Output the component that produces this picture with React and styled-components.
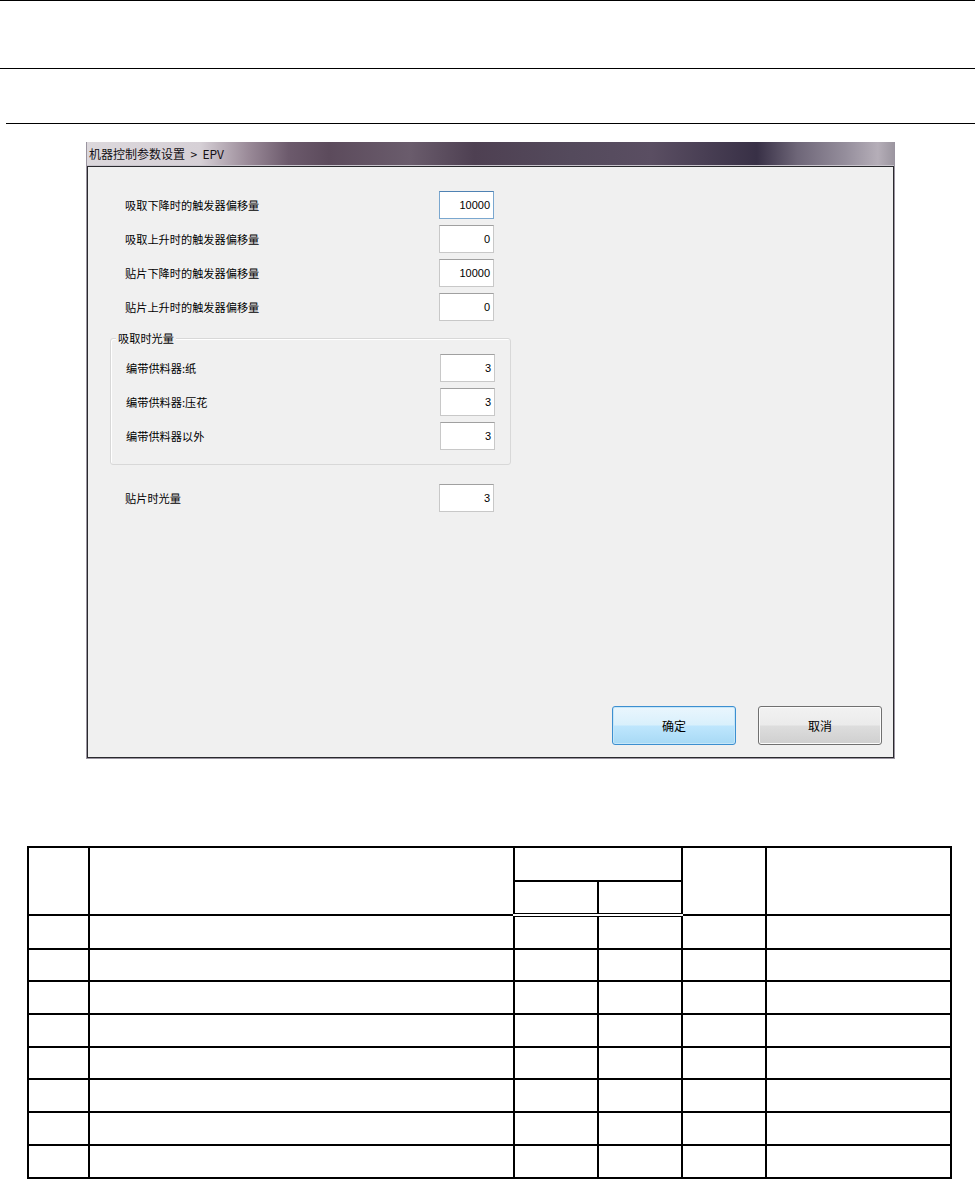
import styled, { createGlobalStyle } from "styled-components";

const GlobalStyle = createGlobalStyle`
  body {
    margin: 0;
    background: #ffffff;
    font-family: "Noto Sans CJK SC", "Liberation Sans", sans-serif;
  }
`;

const fields = [
  { label: "吸取下降时的触发器偏移量", value: "10000", focused: true },
  { label: "吸取上升时的触发器偏移量", value: "0" },
  { label: "贴片下降时的触发器偏移量", value: "10000" },
  { label: "贴片上升时的触发器偏移量", value: "0" },
];

const lightFields = [
  { label: "编带供料器:纸", value: "3" },
  { label: "编带供料器:压花", value: "3" },
  { label: "编带供料器以外", value: "3" },
];

const rows = Array.from({ length: 8 }, (_, i) => i);

export default function App() {
  return (
    <>
      <GlobalStyle />
      <Page>
        <Rule />
        <Rule $top={67} />
        <Rule $top={54} $left={6} />
        <Dialog>
          <TitleBar>机器控制参数设置&nbsp; &gt; &nbsp;EPV</TitleBar>
          <Body>
            <Fields>
              {fields.map((f) => (
                <Row key={f.label}>
                  <Label>{f.label}</Label>
                  <Input $focused={f.focused}>{f.value}</Input>
                </Row>
              ))}
            </Fields>
            <Group>
              <Legend>吸取时光量</Legend>
              {lightFields.map((f) => (
                <Row key={f.label} $inset>
                  <Label>{f.label}</Label>
                  <Input>{f.value}</Input>
                </Row>
              ))}
            </Group>
            <Row $solo>
              <Label>贴片时光量</Label>
              <Input>3</Input>
            </Row>
            <Buttons>
              <Button $primary>确定</Button>
              <Button>取消</Button>
            </Buttons>
          </Body>
        </Dialog>
        <Table>
          <colgroup>
            <col style={{ width: 61 }} />
            <col style={{ width: 425 }} />
            <col style={{ width: 84 }} />
            <col style={{ width: 84 }} />
            <col style={{ width: 84 }} />
            <col style={{ width: 185 }} />
          </colgroup>
          <thead>
            <tr>
              <Th rowSpan={2} />
              <Th rowSpan={2} />
              <Th colSpan={2} />
              <Th rowSpan={2} />
              <Th rowSpan={2} />
            </tr>
            <tr>
              <Th />
              <Th />
            </tr>
          </thead>
          <tbody>
            {rows.map((r) => (
              <tr key={r}>
                <Td />
                <Td />
                <Td />
                <Td />
                <Td />
                <Td />
              </tr>
            ))}
          </tbody>
        </Table>
      </Page>
    </>
  );
}

const Page = styled.div`
  width: 979px;
  min-height: 1179px;
  display: flex;
  flex-direction: column;
`;

const Rule = styled.div`
  height: 1px;
  background: #000000;
  margin: ${(p) => p.$top || 0}px 4px 0 ${(p) => p.$left || 0}px;
`;

const Dialog = styled.div`
  margin: 18px 0 0 86px;
  width: 807px;
  border: 1px solid #9a94a0;
  border-top: none;
  display: flex;
  flex-direction: column;
`;

const TitleBar = styled.div`
  height: 23px;
  line-height: 24px;
  padding-left: 2px;
  font-size: 12px;
  color: #141014;
  border-bottom: 1px solid #c8c4cc;
  background: linear-gradient(
    90deg,
    #dcd8dc 0%,
    #d6d0d6 14%,
    #9a8a98 20%,
    #6c5a6c 25%,
    #5c4b5c 30%,
    #6a5c6c 40%,
    #4e4052 48%,
    #544a5c 60%,
    #5a4e62 70%,
    #383046 83%,
    #6e6678 88%,
    #958e9c 94%,
    #b5aeb8 98%,
    #9c96a0 100%
  );
`;

const Body = styled.div`
  height: 592px;
  background: #f0f0f0;
  border: 1px solid #2a2a2e;
  display: flex;
  flex-direction: column;
  padding: 24px 0 0 0;
  box-sizing: border-box;
`;

const Fields = styled.div`
  display: flex;
  flex-direction: column;
  gap: 6px;
`;

const Row = styled.div`
  display: flex;
  align-items: center;
  padding-left: ${(p) => (p.$inset ? "15px" : "37px")};
  margin-top: ${(p) => (p.$solo ? "19px" : "0")};
`;

const Label = styled.div`
  width: 314px;
  font-size: 11.2px;
  color: #000000;
`;

const Input = styled.div`
  width: 50px;
  height: 26px;
  border: 1px solid ${(p) => (p.$focused ? "#7aa7cf" : "#c8c8c8")};
  border-top-color: ${(p) => (p.$focused ? "#4f82b3" : "#a0a0a0")};
  background: #ffffff;
  font-family: "Liberation Sans", sans-serif;
  font-size: 11px;
  color: #000000;
  text-align: right;
  line-height: 27px;
  padding-right: 3px;
  box-sizing: content-box;
`;

const Group = styled.div`
  position: relative;
  margin: 17px 0 0 22px;
  width: 401px;
  height: 127px;
  border: 1px solid #d8d8d8;
  border-radius: 3px;
  box-shadow: inset 1px 1px 0 #ffffff;
  display: flex;
  flex-direction: column;
  gap: 6px;
  padding-top: 15px;
  box-sizing: border-box;
`;

const Legend = styled.div`
  position: absolute;
  top: -9px;
  left: 5px;
  padding: 0 2px;
  background: #f0f0f0;
  font-size: 11.2px;
  color: #000000;
`;

const Buttons = styled.div`
  margin-top: auto;
  display: flex;
  justify-content: flex-end;
  gap: 22px;
  padding: 0 11px 12px 0;
`;

const Button = styled.div`
  width: 122px;
  height: 37px;
  border-radius: 3px;
  border: 1px solid ${(p) => (p.$primary ? "#3c8fd0" : "#707070")};
  background: ${(p) =>
    p.$primary
      ? "linear-gradient(180deg, #eaf6fd 0%, #d9f0fc 48%, #bee6fd 52%, #a7d9f5 100%)"
      : "linear-gradient(180deg, #f2f2f2 0%, #ebebeb 48%, #dddddd 52%, #cfcfcf 100%)"};
  box-shadow: inset 0 0 0 1px ${(p) => (p.$primary ? "#c6e6f8" : "#fbfbfb")};
  display: flex;
  align-items: center;
  justify-content: center;
  font-size: 12px;
  color: #000000;
`;

const Table = styled.table`
  margin: 87px 0 0 27px;
  width: 923px;
  border-collapse: collapse;
  table-layout: fixed;
  border: 2px solid #000000;
`;

const Th = styled.th`
  height: 31.5px;
  border: 2px solid #000000;
  padding: 0;
  tr:last-child > & {
    border-bottom: 4px double #000000;
  }
`;

const Td = styled.td`
  height: 30.7px;
  border: 2px solid #000000;
  padding: 0;
`;
